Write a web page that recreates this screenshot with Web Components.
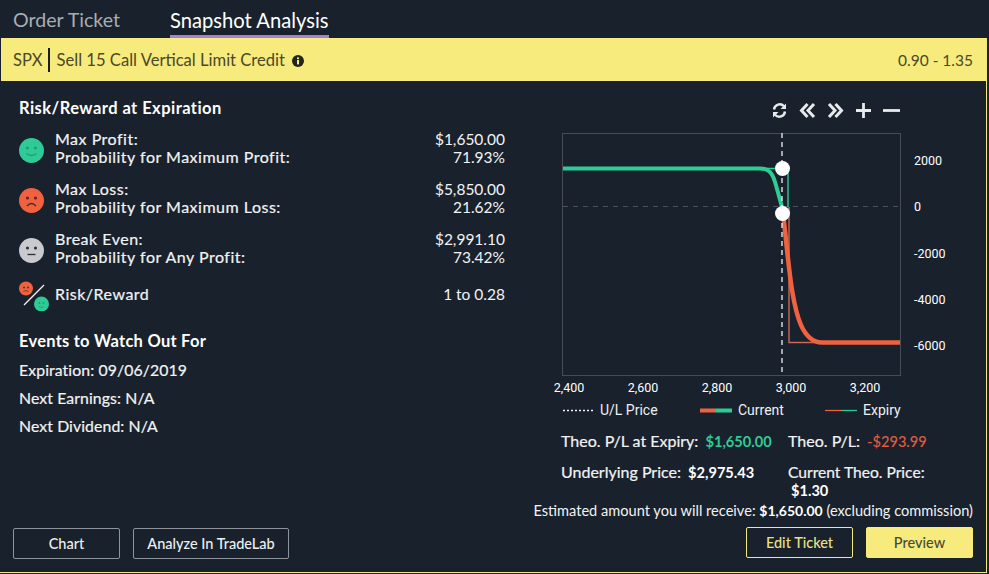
<!DOCTYPE html>
<html>
<head>
<meta charset="utf-8">
<title>Snapshot Analysis</title>
<style>
  html, body { margin: 0; height: 100%; background: #19212c; }
</style>
</head>
<body>
<snapshot-panel>
  <ticket-tabs slot="tabs"></ticket-tabs>
  <order-banner slot="banner"></order-banner>
  <risk-summary slot="left"></risk-summary>
  <pl-chart slot="right"></pl-chart>
  <theo-stats slot="right"></theo-stats>
  <action-bar slot="footer"></action-bar>
</snapshot-panel>

<script>
const FONT = '"Lato", "Open Sans", sans-serif';
const CHART_FONT = 'Roboto, sans-serif';

class SnapshotPanel extends HTMLElement {
  constructor() {
    super();
    this.attachShadow({ mode: "open" });
    this.shadowRoot.innerHTML = `
      <style>
        :host {
          display: flex;
          flex-direction: column;
          box-sizing: border-box;
          width: 989px;
          height: 574px;
          background: #19212c;
          color: #fff;
          font-family: ${FONT};
          border-right: 2px solid #19212c;
        }
        .frame {
          flex: 1;
          display: flex;
          flex-direction: column;
          min-height: 0;
          border-right: 1px solid #f3ea7b;
          border-bottom: 1px solid #f3ea7b;
          margin-bottom: 1px;
          box-sizing: border-box;
        }
        .body { flex: 1; display: flex; min-height: 0; }
        .left { width: 533px; box-sizing: border-box; padding: 18px 0 0 19px; }
        .right { flex: 1; min-width: 0; display: flex; flex-direction: column; }
      </style>
      <slot name="tabs"></slot>
      <div class="frame">
        <slot name="banner"></slot>
        <div class="body">
          <div class="left"><slot name="left"></slot></div>
          <div class="right"><slot name="right"></slot></div>
        </div>
        <slot name="footer"></slot>
      </div>
    `;
  }
}

class TicketTabs extends HTMLElement {
  constructor() {
    super();
    this.attachShadow({ mode: "open" });
    this.shadowRoot.innerHTML = `
      <style>
        :host { display: flex; height: 38px; padding-left: 13px; gap: 50px; box-sizing: border-box; }
        span { display: block; box-sizing: border-box; height: 38px; line-height: 40px; white-space: nowrap; }
        .off { color: #a7adb5; width: 107px; font-size: 19.6px; }
        .on { color: #fff; width: 159px; font-size: 20.2px; border-bottom: 3px solid #a57fdc; }
      </style>
      <span class="off">Order Ticket</span>
      <span class="on">Snapshot Analysis</span>
    `;
  }
}

class OrderBanner extends HTMLElement {
  constructor() {
    super();
    this.attachShadow({ mode: "open" });
    this.shadowRoot.innerHTML = `
      <style>
        :host {
          display: flex;
          align-items: center;
          height: 43px;
          margin-left: 1px;
          padding: 0 13px 0 12px;
          background: #f6eb7c;
          color: #4b4829;
          font-size: 16.6px;
        }
        .sym { padding-right: 5px; border-right: 2px solid #1b1f24; line-height: 24px; }
        .desc { padding-left: 7px; }
        svg { width: 12px; height: 12px; margin: 2px 0 0 7px; }
        .range { margin-left: auto; font-size: 15.5px; }
      </style>
      <span class="sym">SPX</span>
      <span class="desc">Sell 15 Call Vertical Limit Credit</span>
      <svg viewBox="0 0 12 12"><circle cx="6" cy="6" r="6" fill="#23241c"/><rect x="5" y="5" width="2" height="4.4" fill="#f6eb7c"/><rect x="5" y="2.4" width="2" height="1.7" fill="#f6eb7c"/></svg>
      <span class="range">0.90 - 1.35</span>
    `;
  }
}

class SmileyFace extends HTMLElement {
  constructor() {
    super();
    this.attachShadow({ mode: "open" });
    const mood = this.getAttribute("mood") || "good";
    const fill = { good: "#2fcb96", bad: "#f0623f", even: "#c8cacd" }[mood];
    const ink = { good: "#1d9c72", bad: "#4a2a22", even: "#2b2d30" }[mood];
    const mouth = {
      good: "M7.5 15.5Q12.5 19.5 17.5 15.5",
      bad: "M8 18Q12.5 13 17 18",
      even: "M8.5 16.5H16.5"
    }[mood];
    this.shadowRoot.innerHTML = `
      <style>
        :host { display: block; width: 25px; height: 25px; margin: 4px 0 0; }
        svg { display: block; width: 100%; height: 100%; }
      </style>
      <svg viewBox="0 0 25 25">
        <circle cx="12.5" cy="12.5" r="12.5" fill="${fill}"/>
        <circle cx="8.5" cy="10" r="1.5" fill="${ink}"/>
        <circle cx="16.5" cy="10" r="1.5" fill="${ink}"/>
        <path d="${mouth}" fill="none" stroke="${ink}" stroke-width="1.3"/>
      </svg>
    `;
  }
}

class RiskRow extends HTMLElement {
  constructor() {
    super();
    this.attachShadow({ mode: "open" });
    this.shadowRoot.innerHTML = `
      <style>
        :host { display: grid; grid-template-columns: 36px 1fr auto; align-items: center; width: 486px; height: 36px; line-height: 18px; color: #f2f3f4; }
        .labels { display: flex; flex-direction: column; font-size: 16px; letter-spacing: .5px; -webkit-text-stroke: .2px #f2f3f4; }
        .vals { display: flex; flex-direction: column; text-align: right; font-size: 15.5px; }
      </style>
      <slot name="icon"></slot>
      <div class="labels"><slot name="labels"></slot></div>
      <div class="vals"><slot name="vals"></slot></div>
    `;
  }
}

class RiskSummary extends HTMLElement {
  constructor() {
    super();
    this.attachShadow({ mode: "open" });
    this.shadowRoot.innerHTML = `
      <style>
        :host { display: block; color: #f2f3f4; }
        h3 { margin: 0; font-size: 16.5px; letter-spacing: .45px; line-height: 18px; font-weight: 700; color: #fff; }
        .rows { display: flex; flex-direction: column; margin-top: 13px; }
        .r2 { margin-top: 14px; }
        .r3 { margin-top: 14px; }
        .r4 { margin-top: 10px; }
        span[slot] { display: block; white-space: nowrap; }
        .ratio { display: block; width: 30px; height: 30px; margin-top: 4px; }
        .events { margin-top: 20px; }
        .events h3 { letter-spacing: .25px; }
        .events p { margin: 11px 0 0; line-height: 17px; font-size: 15.8px; letter-spacing: .1px; -webkit-text-stroke: .2px #f2f3f4; }
      </style>
      <h3>Risk/Reward at Expiration</h3>
      <div class="rows">
        <risk-row>
          <smiley-face slot="icon" mood="good"></smiley-face>
          <span slot="labels">Max Profit:</span><span slot="labels">Probability for Maximum Profit:</span>
          <span slot="vals">$1,650.00</span><span slot="vals">71.93%</span>
        </risk-row>
        <risk-row class="r2">
          <smiley-face slot="icon" mood="bad"></smiley-face>
          <span slot="labels">Max Loss:</span><span slot="labels">Probability for Maximum Loss:</span>
          <span slot="vals">$5,850.00</span><span slot="vals">21.62%</span>
        </risk-row>
        <risk-row class="r3">
          <smiley-face slot="icon" mood="even"></smiley-face>
          <span slot="labels">Break Even:</span><span slot="labels">Probability for Any Profit:</span>
          <span slot="vals">$2,991.10</span><span slot="vals">73.42%</span>
        </risk-row>
        <risk-row class="r4">
          <svg slot="icon" class="ratio" viewBox="0 0 30 30">
            <circle cx="7" cy="7.5" r="7" fill="#f0623f"/><circle cx="5" cy="6.500" r=".9" fill="#4a2a22"/><circle cx="9" cy="6.500" r=".9" fill="#4a2a22"/><path d="M4.5 10.500Q7 8.500 9.5 10.500" fill="none" stroke="#4a2a22" stroke-width=".7"/>
            <path d="M5 24L25 4" stroke="#f2f3f4" stroke-width="1.2"/>
            <circle cx="22.500" cy="23" r="7.500" fill="#2fcb96"/><circle cx="20.500" cy="22" r=".9" fill="#1d9c72"/><circle cx="24.500" cy="22" r=".9" fill="#1d9c72"/><path d="M20 25.500Q22.500 27.500 25 25.500" fill="none" stroke="#1d9c72" stroke-width=".7"/>
          </svg>
          <span slot="labels">Risk/Reward</span>
          <span slot="vals">1 to 0.28</span>
        </risk-row>
      </div>
      <div class="events">
        <h3>Events to Watch Out For</h3>
        <p>Expiration: 09/06/2019</p>
        <p>Next Earnings: N/A</p>
        <p>Next Dividend: N/A</p>
      </div>
    `;
  }
}

class PlChart extends HTMLElement {
  constructor() {
    super();
    this.attachShadow({ mode: "open" });
    const GREEN = "#2fcb96", RED = "#f0623f", THIN_RED = "#c96a55";
    this.shadowRoot.innerHTML = `
      <style>
        :host { display: block; height: 346px; position: relative; }
        svg.plot { display: block; width: 452px; height: 346px; }
        text { font-family: ${CHART_FONT}; font-size: 12.5px; fill: #fff; }
        .tools { position: absolute; top: 21px; left: 238px; display: flex; align-items: center; gap: 11px; }
        .tools svg { display: block; width: 17px; height: 17px; }
        .legend { font-size: 14px; fill: #eef0f2; }
      </style>
      <svg class="plot" viewBox="533 81 452 346">
        <rect x="562.5" y="133.5" width="338" height="242" fill="none" stroke="#454c56"/>
        <path d="M563 206.5H900" stroke="#4a515b" stroke-dasharray="5 5"/>

        <!-- expiry: thin line -->
        <path d="M563 168.500H788V207" fill="none" stroke="${GREEN}" stroke-width="1.4"/>
        <path d="M789 207V342.500H900" fill="none" stroke="${THIN_RED}" stroke-width="1.4"/>

        <!-- current: thick curve -->
        <path d="M563 168.500H760C768 168.500 772 172 775 182C778 192 780 200 782 207" fill="none" stroke="${GREEN}" stroke-width="4"/>
        <path d="M782 207C785 225 788 265 792 290C796 314 802 342 822 342.500H900" fill="none" stroke="${RED}" stroke-width="4.500"/>

        <path d="M782 133V376" stroke="#f2f3f4" stroke-width="1.3" stroke-dasharray="5 4"/>
        <circle cx="782.500" cy="168.500" r="7.500" fill="#fff"/>
        <circle cx="782.500" cy="213.500" r="7.500" fill="#fff"/>

        <text x="914" y="165">2000</text>
        <text x="914" y="211">0</text>
        <text x="914" y="258">-2000</text>
        <text x="914" y="304">-4000</text>
        <text x="914" y="350">-6000</text>

        <text x="569" y="392" text-anchor="middle">2,400</text>
        <text x="643" y="392" text-anchor="middle">2,600</text>
        <text x="717" y="392" text-anchor="middle">2,800</text>
        <text x="791" y="392" text-anchor="middle">3,000</text>
        <text x="865" y="392" text-anchor="middle">3,200</text>

        <path d="M563 410.500H595" stroke="#f2f3f4" stroke-width="1.3" stroke-dasharray="2 2"/>
        <text class="legend" x="600" y="415">U/L Price</text>
        <path d="M700 410.500H716" stroke="${RED}" stroke-width="4"/>
        <path d="M716 410.500H732" stroke="${GREEN}" stroke-width="4"/>
        <text class="legend" x="738" y="415">Current</text>
        <path d="M825 410.500H841" stroke="${RED}" stroke-width="1.3"/>
        <path d="M841 410.500H857" stroke="${GREEN}" stroke-width="1.3"/>
        <text class="legend" x="863" y="415">Expiry</text>
      </svg>
      <div class="tools">
        <svg viewBox="0 0 17 17"><path d="M3 7.500A5.800 5.800 0 0 1 13 4.200M14 9.500A5.800 5.800 0 0 1 4 12.800" fill="none" stroke="#e8eaec" stroke-width="2.400"/><path d="M15 1.500V7H9.500Z M2 15.500V10H7.500Z" fill="#e8eaec"/></svg>
        <svg viewBox="0 0 17 17"><path d="M8.500 2L2.500 8.500L8.500 15M15 2L9 8.500L15 15" fill="none" stroke="#e8eaec" stroke-width="3"/></svg>
        <svg viewBox="0 0 17 17"><path d="M2 2L8 8.500L2 15M8.500 2L14.500 8.500L8.500 15" fill="none" stroke="#e8eaec" stroke-width="3"/></svg>
        <svg viewBox="0 0 17 17"><path d="M8.500 1V16M1 8.500H16" fill="none" stroke="#e8eaec" stroke-width="2.800"/></svg>
        <svg viewBox="0 0 17 17"><path d="M0 8.500H17" fill="none" stroke="#e8eaec" stroke-width="2.800"/></svg>
      </div>
    `;
  }
}

class TheoStats extends HTMLElement {
  constructor() {
    super();
    this.attachShadow({ mode: "open" });
    this.shadowRoot.innerHTML = `
      <style>
        :host { display: block; color: #f2f3f4; line-height: 17px; }
        .grid { display: grid; grid-template-columns: 227px 1fr; padding-left: 28px; row-gap: 13px; margin-top: 5px; font-size: 16px; }
        span { -webkit-text-stroke: .2px #f2f3f4; }
        b { font-weight: 700; font-size: 14.6px; color: #fff; margin-left: 3px; }
        .gain { color: #2fcb96; }
        .loss { color: #e35b3f; font-weight: 500; }
        .price { display: block; margin: 1px 0 0 3px; }
        .cur { font-size: 15.6px; }
        .est { text-align: right; white-space: nowrap; font-size: 14.6px; padding-right: 13px; margin-top: 3px; }
        .est b { font-size: 14px; margin: 0; }
      </style>
      <div class="grid">
        <div><span>Theo. P/L at Expiry:</span> <b class="gain">$1,650.00</b></div>
        <div><span>Theo. P/L:</span> <b class="loss">-$293.99</b></div>
        <div><span>Underlying Price:</span> <b>$2,975.43</b></div>
        <div><span class="cur">Current Theo. Price:</span><b class="price">$1.30</b></div>
      </div>
      <div class="est">Estimated amount you will receive: <b>$1,650.00</b> (excluding commission)</div>
    `;
  }
}

class ActionButton extends HTMLElement {
  constructor() {
    super();
    this.attachShadow({ mode: "open" });
    this.shadowRoot.innerHTML = `
      <style>
        :host { display: block; }
        button {
          display: block;
          box-sizing: border-box;
          width: var(--w, 107px);
          height: 31px;
          padding: 0;
          border-radius: 2px;
          border: 1px solid #8d949c;
          background: transparent;
          color: #eef0f2;
          font: 500 14.5px ${FONT};
        }
        :host([kind="outline"]) button { border-color: #f3ea7b; color: #e9e08a; }
        :host([kind="solid"]) button { border-color: #f6eb7c; background: #f6eb7c; color: #4a4a32; }
      </style>
      <button><slot></slot></button>
    `;
  }
}

class ActionBar extends HTMLElement {
  constructor() {
    super();
    this.attachShadow({ mode: "open" });
    this.shadowRoot.innerHTML = `
      <style>
        :host { display: flex; align-items: flex-start; gap: 13px; padding: 0 13px 14px 13px; }
        .gap { flex: 1; }
        .low { margin: 1px 0 -1px; }
        .wide { --w: 156px; }
      </style>
      <action-button class="low">Chart</action-button>
      <action-button class="low wide">Analyze In TradeLab</action-button>
      <span class="gap"></span>
      <action-button kind="outline">Edit Ticket</action-button>
      <action-button kind="solid">Preview</action-button>
    `;
  }
}

customElements.define("snapshot-panel", SnapshotPanel);
customElements.define("ticket-tabs", TicketTabs);
customElements.define("order-banner", OrderBanner);
customElements.define("smiley-face", SmileyFace);
customElements.define("risk-row", RiskRow);
customElements.define("risk-summary", RiskSummary);
customElements.define("pl-chart", PlChart);
customElements.define("theo-stats", TheoStats);
customElements.define("action-button", ActionButton);
customElements.define("action-bar", ActionBar);
</script>
</body>
</html>
